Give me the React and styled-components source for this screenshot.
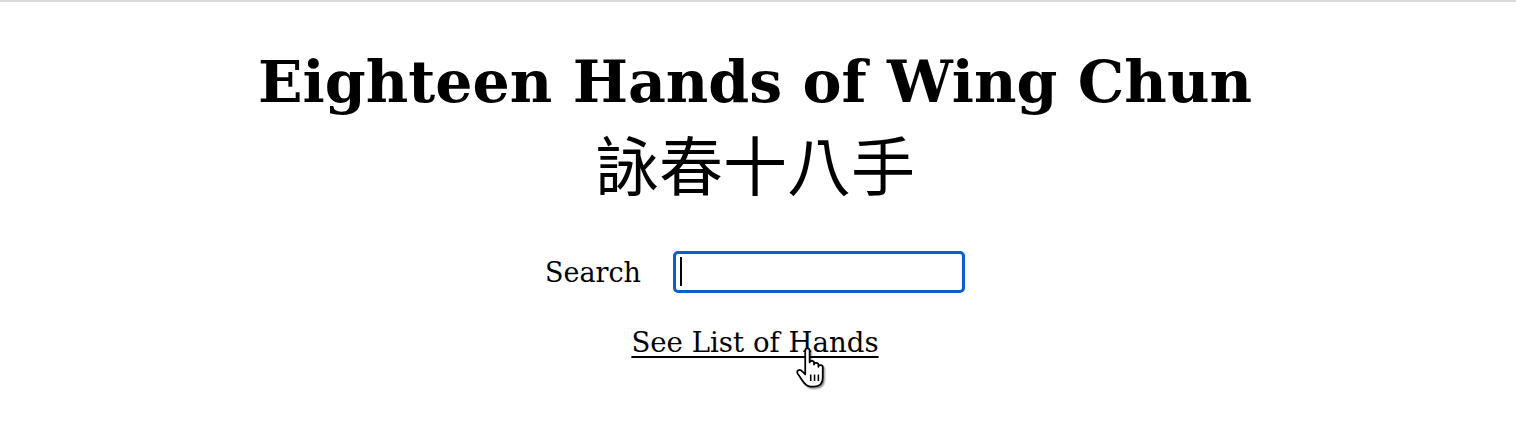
import React from 'react';
import styled, { createGlobalStyle } from 'styled-components';

const GlobalStyle = createGlobalStyle`
  html, body {
    margin: 0;
    padding: 0;
    background: #fff;
  }
  body {
    border-top: 2px solid #dadada;
    font-family: "DejaVu Serif", "Liberation Serif", serif;
    color: #000;
  }
`;

const Page = styled.main`
  box-sizing: border-box;
  min-height: calc(100vh - 2px);
  display: flex;
  flex-direction: column;
  align-items: center;
  padding: 40px 6px 0 0;
`;

const Title = styled.h1`
  margin: 0;
  font-family: "DejaVu Serif", serif;
  font-size: 58.5px;
  font-weight: bold;
  line-height: 80px;
`;

const Subtitle = styled.h2`
  margin: 0;
  font-family: "Noto Sans CJK TC", "Noto Sans CJK SC", sans-serif;
  font-size: 64px;
  font-weight: 400;
  line-height: 80px;
`;

const SearchRow = styled.label`
  display: flex;
  align-items: center;
  gap: 32px;
  margin-top: 49px;
  font-size: 27px;
  font-family: "DejaVu Serif", serif;
`;

const InputWrap = styled.span`
  position: relative;
  display: block;
`;

const SearchInput = styled.input`
  display: block;
  box-sizing: border-box;
  width: 292px;
  height: 42px;
  border: 3px solid #0a5fcc;
  border-radius: 5px;
  outline: none;
  padding: 0 4px;
  font-size: 22px;
  font-family: "DejaVu Serif", serif;
  caret-color: transparent;
`;

// drawn caret, since the focused field's own caret blinks
const Caret = styled.span`
  position: absolute;
  left: 7px;
  top: 6px;
  width: 2px;
  height: 29px;
  background: #000;
`;

const LinkWrap = styled.div`
  position: relative;
  margin-top: 33px;
`;

const HandsLink = styled.a`
  font-size: 27.6px;
  color: #000;
  text-decoration: underline;
  text-decoration-thickness: 2px;
  text-underline-offset: 4px;
  font-family: "DejaVu Serif", serif;
`;

const Pointer = styled.div`
  position: absolute;
  left: 164px;
  top: 20px;
  width: 38px;
  height: 46px;
  pointer-events: none;

  svg {
    display: block;
    width: 38px;
    height: 46px;
  }
`;

const handPath =
  'M9 4 C9 1.5 13 1.5 13 4 L13 15 C13 13 17 13 17 15 L17 17 C17 15 21 15 21 17 L21 19 C21 17 25 17 25 19 L25 29 C25 34 22 37 17 37 L14 37 C10 37 8 34 6 31 L2 25 C0.5 22.5 4 20.5 6 23 L9 26 Z';

const HandCursor = () => (
  <Pointer>
    <svg viewBox="0 0 34 42" width="38" height="46">
      <path d={handPath} transform="translate(1.5 1.8)" fill="#000" fillOpacity="0.28" stroke="#000" strokeOpacity="0.18" strokeWidth="2.4" />
      <path d={handPath} fill="#fff" stroke="#000" strokeWidth="1.6" strokeLinejoin="round" />
      <path d="M14 26 L14 32 M17.5 26 L17.5 32 M21 26 L21 32" stroke="#000" strokeWidth="1.4" />
    </svg>
  </Pointer>
);

const App = () => {
  return (
    <>
      <GlobalStyle />
      <Page>
        <Title>Eighteen Hands of Wing Chun</Title>
        <Subtitle>詠春十八手</Subtitle>
        <SearchRow>
          Search
          <InputWrap>
            <SearchInput type="text" autoFocus />
            <Caret />
          </InputWrap>
        </SearchRow>
        <LinkWrap>
          <HandsLink href="#">See List of Hands</HandsLink>
          <HandCursor />
        </LinkWrap>
      </Page>
    </>
  );
};

export default App;
